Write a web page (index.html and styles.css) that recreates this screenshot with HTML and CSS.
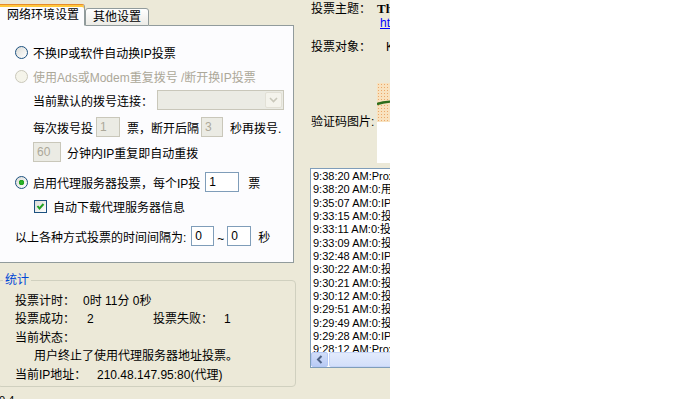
FILE: index.html
```html
<!DOCTYPE html>
<html lang="zh">
  <head>
    <meta charset="UTF-8" />
    <title>投票设置</title>
    <link rel="stylesheet" href="styles.css">
  </head>
  <body>
    <div class="app">
      <div class="left">
        <div class="tabs">
          <div class="tab tab-active">网络环境设置</div>
          <div class="tab">其他设置</div>
          <div class="tab-fill"></div>
        </div>
        <div class="panel">
          <div class="row">
            <span class="radio"></span><span>不换IP或软件自动换IP投票</span>
          </div>
          <div class="row row-2 off">
            <span class="radio radio-off"></span><span>使用Ads或Modem重复拨号 /断开换IP投票</span>
          </div>
          <div class="row row-3 sub">
            <span>当前默认的拨号连接：</span>
            <span class="combo">
              <span class="combo-btn">
                <svg width="9" height="6" viewBox="0 0 9 6"><path d="M1 1 L4.5 4.5 L8 1" fill="none" stroke="#C9C7BA" stroke-width="1.6"/></svg>
              </span>
            </span>
          </div>
          <div class="row row-4 sub">
            <span>每次拨号投</span>
            <span class="field field-off w24 ml3">1</span>
            <span class="ml7">票，断开后隔</span>
            <span class="field field-off w22 ml2">3</span>
            <span class="ml7">秒再拨号.</span>
          </div>
          <div class="row row-5 sub">
            <span class="field field-off w28">60</span>
            <span class="ml6">分钟内IP重复即自动重拨</span>
          </div>
          <div class="row row-6">
            <span class="radio radio-on"></span><span>启用代理服务器投票，每个IP投</span>
            <span class="field w34 ml5">1</span>
            <span class="ml9">票</span>
          </div>
          <div class="row row-7">
            <span class="check">
              <svg width="11" height="11" viewBox="0 0 11 11"><path d="M2.5 5 L4.5 7.5 L8.5 3" fill="none" stroke="#21A121" stroke-width="2"/></svg>
            </span>
            <span>自动下载代理服务器信息</span>
          </div>
          <div class="row row-8">
            <span>以上各种方式投票的时间间隔为:</span>
            <span class="field w23 ml5">0</span>
            <span class="tilde">~</span>
            <span class="field w24">0</span>
            <span class="ml7">秒</span>
          </div>
        </div>
        <fieldset class="stats">
          <legend>统计</legend>
          <div class="stat"><span class="k">投票计时：</span><span>0时 11分 0秒</span></div>
          <div class="stat"><span class="k">投票成功：</span><span class="v-ok">2</span><span class="k-fail">投票失败：</span><span>1</span></div>
          <div class="stat"><span>当前状态：</span></div>
          <div class="stat stat-msg"><span>用户终止了使用代理服务器地址投票。</span></div>
          <div class="stat"><span class="k-ip">当前IP地址：</span><span>210.48.147.95:80(代理)</span></div>
        </fieldset>
        <div class="status">0.4</div>
      </div>
      <div class="right">
        <div class="info">
          <span class="info-k">投票主题：</span><span class="topic">The Best of</span>
        </div>
        <div class="info link">http://</div>
        <div class="info info-c">
          <span class="info-k">投票对象：</span><span class="target">Kim</span>
        </div>
        <div class="captcha-row">
          <span class="info-k captcha-k">验证码图片:</span>
          <div class="captcha">
            <div class="captcha-img">
              <svg width="60" height="39" viewBox="0 0 60 39"><path d="M0 21 L6 19.5 L14 18.5" fill="none" stroke="#2B6E1C" stroke-width="2.4"/></svg>
            </div>
          </div>
        </div>
        <div class="log">
          <div class="log-items">
            <div>9:38:20 AM:Proxy服务器</div>
            <div>9:38:20 AM:0:用户终止</div>
            <div>9:35:07 AM:0:IP地址</div>
            <div>9:33:15 AM:0:投票</div>
            <div>9:33:11 AM:0:投票</div>
            <div>9:33:09 AM:0:投票</div>
            <div>9:32:48 AM:0:IP地址</div>
            <div>9:30:22 AM:0:投票</div>
            <div>9:30:21 AM:0:投票</div>
            <div>9:30:12 AM:0:投票</div>
            <div>9:29:51 AM:0:投票</div>
            <div>9:29:49 AM:0:投票</div>
            <div>9:29:28 AM:0:IP地址</div>
            <div>9:28:12 AM:Proxy服务器</div>
          </div>
          <div class="hscroll">
            <span class="hbtn">
              <svg width="8" height="9" viewBox="0 0 8 9"><path d="M5.5 1 L2 4.5 L5.5 8" fill="none" stroke="#4D6185" stroke-width="2"/></svg>
            </span>
            <span class="hthumb"></span>
          </div>
        </div>
      </div>
    </div>
  </body>
</html>
```

FILE: styles.css
```css
html,
body {
  margin: 0;
  height: 100%;
  overflow: hidden;
  background: #fff;
}
body {
  font-family: "Liberation Sans", "Noto Sans CJK SC", sans-serif;
  font-size: 12px;
  color: #000;
}
.app {
  display: flex;
  width: 390px;
  height: 399px;
  background: #ece9d8;
  overflow: hidden;
}
.left {
  width: 296px;
  flex: none;
}

/* tabs */
.tabs {
  display: flex;
  align-items: flex-end;
  width: 294px;
  height: 26px;
}
.tab {
  box-sizing: border-box;
  width: 64px;
  height: 18px;
  padding-left: 7px;
  border: 1px solid #919b9c;
  border-radius: 3px 3px 0 0;
  background: linear-gradient(#ffffff, #ecebe6);
  line-height: 16px;
  white-space: nowrap;
}
.tab-active {
  width: 85px;
  height: 22px;
  border: 0;
  border-top: 1px solid #e68b2c;
  border-right: 1px solid #919b9c;
  border-bottom: 1px solid #fcfcfe;
  border-radius: 0 3px 0 0;
  background: #fcfcfe;
  box-shadow: inset 0 2px #ffc83c;
  line-height: 20px;
}
.tab-fill {
  flex: 1;
  border-bottom: 1px solid #919b9c;
}
.panel {
  box-sizing: border-box;
  width: 294px;
  height: 237px;
  padding: 16px 0 0 15px;
  background: #fcfcfe;
  border-right: 1px solid #919b9c;
  border-bottom: 1px solid #919b9c;
}

/* rows */
.row {
  display: flex;
  align-items: center;
  height: 20px;
  white-space: nowrap;
}
.row-2 { margin-top: 4px; }
.row-3 { margin-top: 4px; }
.row-4 { margin-top: 7px; }
.row-5 { margin-top: 5px; }
.row-6 { margin-top: 10px; }
.row-7 { margin-top: 4px; }
.row-8 { margin-top: 10px; }
.sub { padding-left: 18px; }
.off { color: #aca899; }

.ml2 { margin-left: 2px; }
.ml3 { margin-left: 3px; }
.ml5 { margin-left: 5px; }
.ml6 { margin-left: 6px; }
.ml7 { margin-left: 7px; }
.ml9 { margin-left: 9px; }
.w22 { width: 22px; }
.w23 { width: 23px; }
.w24 { width: 24px; }
.w28 { width: 28px; }
.w34 { width: 34px; }

.radio {
  box-sizing: border-box;
  flex: none;
  width: 13px;
  height: 13px;
  margin-right: 5px;
  border: 1px solid #1c5180;
  border-radius: 50%;
  background: linear-gradient(135deg, #dcdcd7, #ffffff);
}
.radio-off {
  border-color: #cac8bb;
  background: #f5f4ea;
}
.radio-on {
  background: radial-gradient(circle, #2dbb2a 0, #21a121 2.5px, transparent 3px),
    linear-gradient(135deg, #dcdcd7, #ffffff);
}
.check {
  box-sizing: border-box;
  flex: none;
  display: flex;
  align-items: center;
  justify-content: center;
  width: 13px;
  height: 13px;
  margin: 0 6px 0 19px;
  border: 1px solid #1c5180;
  background: linear-gradient(135deg, #dcdcd7, #ffffff);
}
.field {
  box-sizing: border-box;
  flex: none;
  height: 20px;
  padding-left: 3px;
  border: 1px solid #7f9db9;
  background: #fff;
  line-height: 18px;
}
.field-off {
  border-color: #c9c7ba;
  background: #ebebe4;
  color: #aca899;
}
.combo {
  box-sizing: border-box;
  display: flex;
  justify-content: flex-end;
  width: 127px;
  height: 20px;
  margin-left: 4px;
  padding: 1px;
  border: 1px solid #c9c7ba;
  background: #ebebe4;
}
.combo-btn {
  box-sizing: border-box;
  display: flex;
  align-items: center;
  justify-content: center;
  width: 17px;
  height: 16px;
  border: 1px solid #e2e0d6;
  border-radius: 2px;
  background: #f4f3ec;
}
.tilde {
  width: 10px;
  margin-left: 3px;
  padding-top: 6px;
  line-height: 14px;
}

/* stats */
.stats {
  box-sizing: border-box;
  width: 299px;
  margin: 9px 0 0 -3px;
  padding: 4px 0 2px 5px;
  border: 1px solid #d0d0bf;
  border-radius: 4px;
}
.stats legend {
  padding: 0 2px;
  color: #0046d5;
  line-height: 16px;
}
.stat {
  display: flex;
  height: 18.4px;
  padding-left: 12px;
  line-height: 18.4px;
  white-space: nowrap;
}
.k { width: 68px; }
.v-ok {
  width: 66px;
  padding-left: 4px;
}
.k-fail { width: 71px; }
.k-ip { width: 82px; }
.stat-msg { padding-left: 31px; }
.status {
  margin: 6px 0 0 -1px;
  font-size: 11px;
  line-height: 14px;
}

/* right column */
.right {
  box-sizing: border-box;
  width: 94px;
  flex: none;
  padding-left: 14px;
  overflow: hidden;
}
.info {
  display: flex;
  height: 14px;
  line-height: 14px;
  white-space: nowrap;
}
.info:first-child { margin-top: 2px; }
.info-k {
  flex: none;
  width: 66px;
  padding-left: 1px;
}
.topic {
  font-family: "Liberation Serif", serif;
  font-size: 13px;
  font-weight: bold;
}
.link {
  padding-left: 70px;
  color: #0000ff;
  text-decoration: underline;
}
.info-c { margin-top: 10px; }
.target { padding-left: 9px; }
.captcha-row {
  display: flex;
  align-items: center;
  height: 80px;
  margin-top: 29px;
  white-space: nowrap;
}
.captcha-k { margin-bottom: 6px; }
.captcha {
  flex: none;
  width: 60px;
  height: 80px;
  background: #fff;
}
.captcha-img {
  height: 39px;
  background: radial-gradient(circle, #eba86a 35%, transparent 45%) 0 0 / 3px 3px,
    #f8e2bf;
}
.captcha-img svg { display: block; }
.log {
  box-sizing: border-box;
  display: flex;
  flex-direction: column;
  width: 140px;
  height: 200px;
  margin-top: 5px;
  border: 1px solid #7f9db9;
  background: #fff;
}
.log-items {
  flex: 1;
  overflow: hidden;
  padding: 1px 0 0 2px;
  font-size: 11px;
  line-height: 13.33px;
  white-space: nowrap;
}
.hscroll {
  display: flex;
  height: 15px;
  flex: none;
}
.hbtn {
  box-sizing: border-box;
  display: flex;
  align-items: center;
  justify-content: center;
  width: 17px;
  border: 1px solid #b4c8f6;
  border-radius: 2px;
  background: linear-gradient(#d2def9, #b9cbf5);
}
.hthumb {
  flex: 1;
  margin-left: 1px;
  border: 1px solid #c6d5f8;
  border-radius: 2px;
  background: linear-gradient(#e3ebfc, #d3dffa);
}
```
